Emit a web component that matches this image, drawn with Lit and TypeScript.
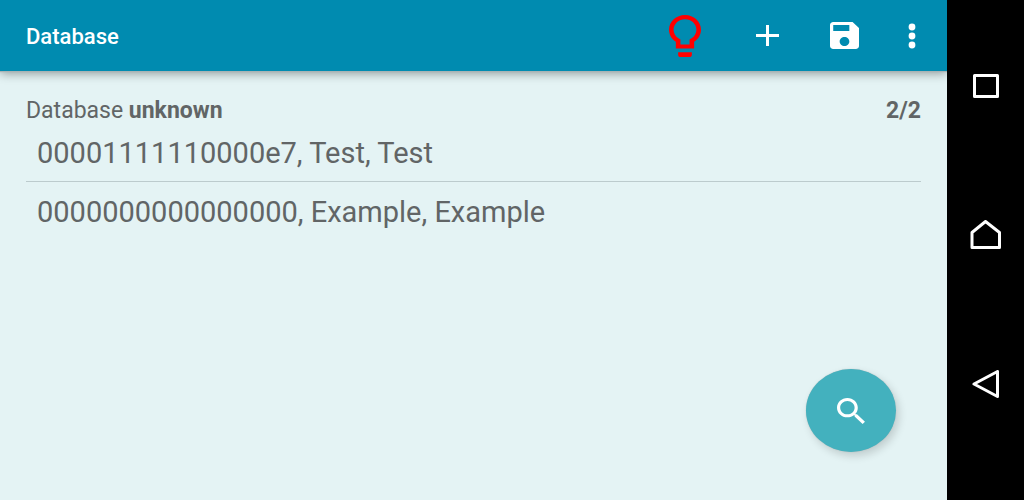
import { LitElement, html, css, svg } from "lit";
import { customElement, state } from "lit/decorators.js";

interface Entry {
  id: string;
  name: string;
  note: string;
}

@customElement("app-root")
export class AppRoot extends LitElement {
  @state() private entries: Entry[] = [
    { id: "00001111110000e7", name: "Test", note: "Test" },
    { id: "0000000000000000", name: "Example", note: "Example" },
  ];

  static styles = css`
    :host {
      display: grid;
      grid-template-columns: minmax(0, 1fr) 77px;
      min-height: 100vh;
      font-family: Roboto, "Liberation Sans", sans-serif;
      color: #616566;
      background: #e4f3f4;
    }
    button {
      display: flex;
      align-items: center;
      justify-content: center;
      margin: 0;
      padding: 0;
      border: 0;
      background: none;
      color: inherit;
      font: inherit;
      cursor: pointer;
    }
    svg {
      display: block;
      fill: currentColor;
    }
    .screen {
      position: relative;
      display: flex;
      flex-direction: column;
    }
    .bar {
      display: flex;
      align-items: stretch;
      justify-content: space-between;
      height: 71px;
      padding: 0 6px 0 26px;
      background: #008bb0;
      color: #fff;
      box-shadow: 0 1px 1px #a9b4b5, 0 2px 10px rgba(0, 0, 0, 0.4);
      clip-path: inset(0 0 -20px 0);
    }
    h1 {
      margin: 0;
      padding-top: 2px;
      font-size: 22px;
      font-weight: 500;
      line-height: 70px;
    }
    .actions {
      display: flex;
    }
    .action {
      width: 77px;
    }
    .hint {
      width: 88px;
      color: #f00;
    }
    .more {
      width: 58px;
    }
    main {
      padding: 28px 26px 0;
    }
    .summary {
      display: flex;
      justify-content: space-between;
      font-size: 23px;
      line-height: 24px;
    }
    ul {
      margin: 0;
      padding: 0;
      list-style: none;
    }
    li + li {
      border-top: 1px solid #bccbcd;
    }
    .entry {
      width: 100%;
      justify-content: flex-start;
      padding: 2px 11px 0;
      font-size: 29px;
      line-height: 56px;
      text-align: left;
    }
    .search {
      position: absolute;
      right: 51px;
      bottom: 48px;
      width: 90px;
      height: 83px;
      border-radius: 50%;
      background: #43b1be;
      color: #fff;
      box-shadow: 0 0 1px #a9b4b5, 3px 4px 9px rgba(0, 0, 0, 0.16);
    }
    .system {
      display: flex;
      flex-direction: column;
      align-items: stretch;
      justify-content: space-between;
      padding: 60px 0 90px;
      background: #000;
      color: #fff;
    }
    .key {
      height: 52px;
    }
    .outline {
      fill: none;
      stroke: currentColor;
      stroke-width: 3;
      stroke-linejoin: round;
    }
  `;

  private icon(box: string, width: number, height: number, shape: unknown, kind = "") {
    return html`<svg class=${kind} viewBox=${box} width=${width} height=${height}
      preserveAspectRatio="none" aria-hidden="true">${shape}</svg>`;
  }

  render() {
    const count = this.entries.length;
    return html`
      <div class="screen">
        <header class="bar">
          <h1>Database</h1>
          <div class="actions">
            <button class="hint" aria-label="Hint">
              ${this.icon("5 2 14 20", 32, 42, svg`<path d="M9 19.700h6v1.300c0 .55-.45 1-1 1h-4c-.55 0-1-.45-1-1zM12 2C8.140 2 5 5.140 5 9c0 2.380 1.190 4.470 3 5.740V18h8V14.740c1.810-1.270 3-3.360 3-5.740 0-3.860-3.140-7-7-7zm2.850 11.100l-.85.6V16h-4v-2.300l-.85-.6C7.800 12.160 7 10.630 7 9c0-2.760 2.240-5 5-5s5 2.240 5 5c0 1.630-.8 3.160-2.150 4.100z"/>`)}
            </button>
            <button class="action" aria-label="Add">
              ${this.icon("0 0 23 21", 23, 21, svg`<path d="M10 0h3v9h10v3H13v9h-3v-9H0V9h10z"/>`)}
            </button>
            <button class="action" aria-label="Save">
              ${this.icon("3 3 18 18", 29, 27, svg`<path d="M17 3H5c-1.11 0-2 .9-2 2v14c0 1.1.89 2 2 2h14c1.1 0 2-.9 2-2V7l-4-4zm-5 16c-1.66 0-3-1.34-3-3s1.34-3 3-3 3 1.34 3 3-1.34 3-3 3zm3-10H5V5h10v4z"/>`)}
            </button>
            <button class="more" aria-label="More options">
              ${this.icon("0 0 8 26", 8, 26, svg`<circle cx="4" cy="4" r="3.4"/><circle cx="4" cy="13" r="3.4"/><circle cx="4" cy="22" r="3.4"/>`)}
            </button>
          </div>
        </header>
        <main>
          <div class="summary">
            <span>Database <b>unknown</b></span>
            <b>${count}/${count}</b>
          </div>
          <ul>
            ${this.entries.map(
              (e) => html`<li><button class="entry">${e.id}, ${e.name}, ${e.note}</button></li>`
            )}
          </ul>
        </main>
        <button class="search" aria-label="Search">
          ${this.icon("3 3 17.5 17.5", 28, 26, svg`<path d="M15.5 14h-.79l-.28-.27C15.41 12.59 16 11.11 16 9.5 16 5.91 13.09 3 9.5 3S3 5.91 3 9.5 5.91 16 9.5 16c1.61 0 3.09-.59 4.23-1.57l.27.28v.79l5 4.99L20.49 19l-4.99-5zm-6 0C7.01 14 5 11.99 5 9.5S7.01 5 9.5 5 14 7.01 14 9.5 11.99 14 9.5 14z"/>`)}
        </button>
      </div>
      <nav class="system" aria-label="System">
        <button class="key" aria-label="Recent apps">
          ${this.icon("0 0 26 24", 26, 24, svg`<rect x="1.5" y="1.5" width="23" height="21"/>`, "outline")}
        </button>
        <button class="key" aria-label="Home">
          ${this.icon("0 0 32 30", 32, 30, svg`<path d="M2 27.5V12.5L15.500 1.500 29.500 12.500V27.500z"/>`, "outline")}
        </button>
        <button class="key" aria-label="Back">
          ${this.icon("0 0 28 28", 28, 28, svg`<path d="M25.500 1.500V26.500L2 14z"/>`, "outline")}
        </button>
      </nav>
    `;
  }
}
